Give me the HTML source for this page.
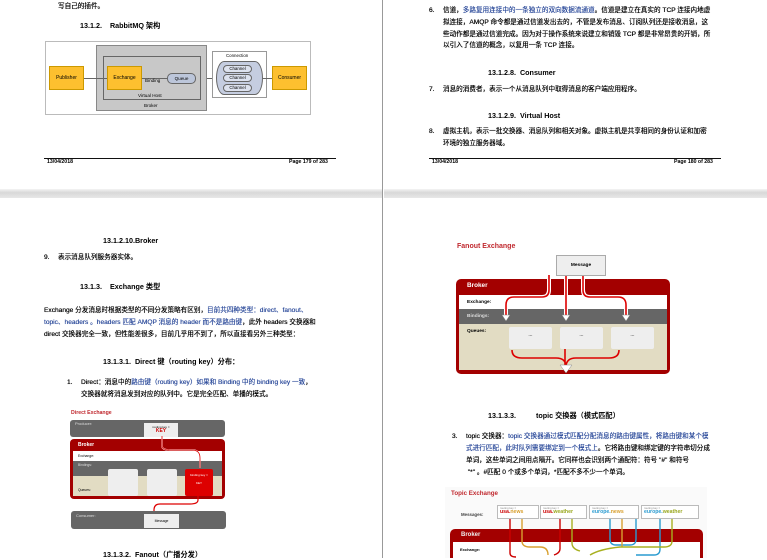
<!DOCTYPE html>
<html><head><meta charset="utf-8"><style>
*{margin:0;padding:0;box-sizing:border-box}
body{width:767px;height:558px;background:#fff;position:relative;overflow:hidden;font-family:"Liberation Sans","Noto Sans CJK SC",sans-serif;color:#000}
.t{position:absolute;font-size:6.6px;line-height:8px;white-space:nowrap;text-shadow:0 0 .4px #000}
.h{position:absolute;font-size:7.2px;font-weight:bold;white-space:nowrap}
.b{color:#2b4a9a;text-shadow:0 0 .4px #2b4a9a}
.ab{position:absolute}
.fl{position:absolute;height:1px;background:#111}
.ft{position:absolute;font-size:5.2px;font-weight:bold}
</style></head><body>
<div class="ab" style="left:0;top:189px;width:383px;height:9px;background:linear-gradient(#f4f4f4,#d8d8d8 40%,#e8e8e8)"></div>
<div class="ab" style="left:384px;top:189px;width:383px;height:9px;background:linear-gradient(#f4f4f4,#d8d8d8 40%,#e8e8e8)"></div>
<div class="ab" style="left:382px;top:0;width:1px;height:558px;background:#999"></div>

<div class="t" style="left:58px;top:3px">写自己的插件。</div>
<div class="h" style="left:80px;top:21px">13.1.2.&nbsp;&nbsp;&nbsp;&nbsp;RabbitMQ 架构</div>
<div class="ab" style="left:45px;top:41px;width:266px;height:74px;border:1px solid #bbb;background:#fff"></div>
<div class="ab" style="left:96px;top:45px;width:111px;height:66px;background:#c8c8c8;border:1px solid #888"></div>
<div class="ab" style="left:103px;top:56px;width:98px;height:44px;border:1px solid #666"></div>
<div class="ab" style="left:49px;top:66px;width:35px;height:24px;background:#fdc02f;border:1px solid #c90;font-size:5px;line-height:22px;text-align:center">Publisher</div>
<div class="ab" style="left:84px;top:78px;width:24px;height:1px;background:#666"></div>
<div class="ab" style="left:107px;top:66px;width:35px;height:24px;background:#fdc02f;border:1px solid #c90;font-size:5px;line-height:22px;text-align:center">Exchange</div>
<div class="ab" style="left:142px;top:78px;width:26px;height:1px;background:#666"></div>
<div class="ab" style="left:145px;top:78px;font-size:4.6px">Binding</div>
<div class="ab" style="left:167px;top:73px;width:29px;height:11px;background:#bcc6da;border:1px solid #666;border-radius:5px;font-size:4.6px;line-height:9px;text-align:center">Queue</div>
<div class="ab" style="left:138px;top:93px;font-size:4.6px">Virtual Host</div>
<div class="ab" style="left:144px;top:103px;font-size:4.6px">Broker</div>
<div class="ab" style="left:207px;top:78px;width:6px;height:1px;background:#666"></div>
<div class="ab" style="left:212px;top:51px;width:55px;height:47px;border:1px solid #999;background:#fff"></div>
<div class="ab" style="left:226px;top:53px;font-size:4.4px">Connection</div>
<div class="ab" style="left:216px;top:61px;width:47px;height:34px;background:#c5cde0;border:1px solid #666;border-radius:8px/17px"></div>
<div class="ab" style="left:223px;top:65px;width:29px;height:8px;background:#dde2ee;border:1px solid #666;border-radius:4px;font-size:4.4px;line-height:6px;text-align:center">Channel</div>
<div class="ab" style="left:223px;top:74px;width:29px;height:8px;background:#dde2ee;border:1px solid #666;border-radius:4px;font-size:4.4px;line-height:6px;text-align:center">Channel</div>
<div class="ab" style="left:223px;top:84px;width:29px;height:8px;background:#dde2ee;border:1px solid #666;border-radius:4px;font-size:4.4px;line-height:6px;text-align:center">Channel</div>
<div class="ab" style="left:263px;top:78px;width:10px;height:1px;background:#666"></div>
<div class="ab" style="left:272px;top:66px;width:35px;height:24px;background:#fdc02f;border:1px solid #c90;font-size:5px;line-height:22px;text-align:center">Consumer</div>
<div class="fl" style="left:44px;top:158px;width:292px"></div>
<div class="ft" style="left:47px;top:159px">13/04/2018</div>
<div class="ft" style="left:289px;top:159px">Page 179 of 283</div>

<div class="t" style="left:429px;top:7px">6.</div>
<div class="t" style="left:443px;top:7px">信道，<span class="b">多路复用连接中的一条独立的双向数据流通道</span>。信道是建立在真实的 TCP 连接内地虚</div>
<div class="t" style="left:443px;top:19px">拟连接，AMQP 命令都是通过信道发出去的，不管是发布消息、订阅队列还是接收消息，这</div>
<div class="t" style="left:443px;top:31px">些动作都是通过信道完成。因为对于操作系统来说建立和销毁 TCP 都是非常昂贵的开销，所</div>
<div class="t" style="left:443px;top:42px">以引入了信道的概念，以复用一条 TCP 连接。</div>
<div class="h" style="left:488px;top:68px">13.1.2.8.&nbsp; Consumer</div>
<div class="t" style="left:429px;top:86px">7.</div>
<div class="t" style="left:443px;top:86px">消息的消费者，表示一个从消息队列中取得消息的客户端应用程序。</div>
<div class="h" style="left:488px;top:111px">13.1.2.9.&nbsp; Virtual Host</div>
<div class="t" style="left:429px;top:128px">8.</div>
<div class="t" style="left:443px;top:128px">虚拟主机，表示一批交换器、消息队列和相关对象。虚拟主机是共享相同的身份认证和加密</div>
<div class="t" style="left:443px;top:140px">环境的独立服务器域。</div>
<div class="fl" style="left:429px;top:158px;width:292px"></div>
<div class="ft" style="left:432px;top:159px">13/04/2018</div>
<div class="ft" style="left:674px;top:159px">Page 180 of 283</div>

<div class="h" style="left:103px;top:236px">13.1.2.10.Broker</div>
<div class="t" style="left:44px;top:254px">9.</div>
<div class="t" style="left:58px;top:254px">表示消息队列服务器实体。</div>
<div class="h" style="left:80px;top:282px">13.1.3.&nbsp;&nbsp;&nbsp;&nbsp;Exchange 类型</div>
<div class="t" style="left:44px;top:307px">Exchange 分发消息时根据类型的不同分发策略有区别，<span class="b">目前共四种类型：direct、fanout、</span></div>
<div class="t" style="left:44px;top:319px"><span class="b">topic、headers 。headers 匹配 AMQP 消息的 header 而不是路由键</span>，此外 headers 交换器和</div>
<div class="t" style="left:44px;top:331px">direct 交换器完全一致，但性能差很多，目前几乎用不到了，所以直接看另外三种类型：</div>
<div class="h" style="left:103px;top:357px">13.1.3.1.&nbsp; Direct 键（routing key）分布：</div>
<div class="t" style="left:67px;top:379px">1.</div>
<div class="t" style="left:81px;top:379px">Direct：消息中的<span class="b">路由键（routing key）如果和 Binding 中的 binding key 一致</span>，</div>
<div class="t" style="left:81px;top:391px">交换器就将消息发到对应的队列中。它是完全匹配、单播的模式。</div>
<div class="ab" style="left:71px;top:410px;font-size:5.2px;font-weight:bold;color:#c0282e">Direct Exchange</div>
<div class="ab" style="left:70px;top:420px;width:155px;height:17px;background:#666;border-radius:3px"></div>
<div class="ab" style="left:75px;top:421px;font-size:4px;color:#ddd">Producer:</div>
<div class="ab" style="left:144px;top:423px;width:34px;height:14px;background:#eee;font-size:3px;text-align:center;line-height:4px;padding-top:2px">routing key =<br><b style="color:#c00;font-size:5px">KEY</b></div>
<div class="ab" style="left:70px;top:439px;width:155px;height:60px;background:#a30000;border-radius:4px"></div>
<div class="ab" style="left:78px;top:442px;font-size:5px;color:#fff;font-weight:bold">Broker</div>
<div class="ab" style="left:73px;top:451px;width:149px;height:10px;background:#fff"></div>
<div class="ab" style="left:78px;top:454px;font-size:3.4px">Exchange:</div>
<div class="ab" style="left:73px;top:461px;width:149px;height:15px;background:#666"></div>
<div class="ab" style="left:73px;top:476px;width:149px;height:20px;background:#e2dcc3"></div>
<div class="ab" style="left:78px;top:463px;font-size:3.4px;color:#ddd">Bindings:</div>
<div class="ab" style="left:78px;top:488px;font-size:3.4px">Queues:</div>
<div class="ab" style="left:108px;top:469px;width:30px;height:27px;background:#eee;border-radius:2px"></div>
<div class="ab" style="left:147px;top:469px;width:30px;height:27px;background:#eee;border-radius:2px"></div>
<div class="ab" style="left:185px;top:469px;width:28px;height:27px;background:#d00;border-radius:2px;font-size:3px;color:#fff;text-align:center;padding-top:4px">binding key =<br><br>KEY</div>
<svg class="ab" style="left:70px;top:420px" width="160" height="115"><path d="M92 16V26Q92 30 100 30H122Q130 30 130 38V48" fill="none" stroke="#fff" stroke-width="1.5"/><path d="M92 16V26Q92 30 100 30H122Q130 30 130 38V48" fill="none" stroke="#d00" stroke-width="0.8"/><path d="M128 76V80Q128 84 120 84H90Q84 84 84 90V96" fill="none" stroke="#d00" stroke-width="1.2"/></svg>
<div class="ab" style="left:71px;top:511px;width:155px;height:18px;background:#666;border-radius:3px"></div>
<div class="ab" style="left:76px;top:513px;font-size:4px;color:#ddd">Consumer:</div>
<div class="ab" style="left:144px;top:514px;width:35px;height:14px;background:#eee;font-size:3.4px;text-align:center;line-height:14px">Message</div>
<div class="h" style="left:103px;top:550px">13.1.3.2.&nbsp; Fanout（广播分发）</div>

<div class="ab" style="left:457px;top:243px;font-size:7px;font-weight:bold;color:#c0282e">Fanout Exchange</div>
<div class="ab" style="left:456px;top:279px;width:214px;height:95px;background:#a30000;border-radius:5px"></div>
<div class="ab" style="left:467px;top:282px;font-size:6.4px;color:#fff;font-weight:bold">Broker</div>
<div class="ab" style="left:459px;top:295px;width:208px;height:14px;background:#fff"></div>
<div class="ab" style="left:467px;top:300px;font-size:4.8px;font-weight:bold">Exchange:</div>
<div class="ab" style="left:459px;top:309px;width:208px;height:15px;background:#666"></div>
<div class="ab" style="left:467px;top:314px;font-size:4.8px;color:#ddd;font-weight:bold">Bindings:</div>
<div class="ab" style="left:459px;top:324px;width:208px;height:46px;background:#e2dcc3"></div>
<div class="ab" style="left:467px;top:329px;font-size:4.8px;font-weight:bold">Queues:</div>
<div class="ab" style="left:509px;top:327px;width:43px;height:22px;background:#eee;border-radius:2px;font-size:5px;text-align:center;line-height:16px">...</div>
<div class="ab" style="left:560px;top:327px;width:43px;height:22px;background:#eee;border-radius:2px;font-size:5px;text-align:center;line-height:16px">...</div>
<div class="ab" style="left:611px;top:327px;width:43px;height:22px;background:#eee;border-radius:2px;font-size:5px;text-align:center;line-height:16px">...</div>
<svg class="ab" style="left:456px;top:255px" width="220" height="120"><g fill="none" stroke="#fff" stroke-width="4"><path d="M93 20V35Q93 42 86 42H58Q50 42 50 50V60M110 20V60M127 20V35Q127 42 134 42H162Q170 42 170 50V60"/></g><g fill="none" stroke="#d00" stroke-width="1.6"><path d="M93 20V35Q93 42 86 42H58Q50 42 50 50V60M110 20V60M127 20V35Q127 42 134 42H162Q170 42 170 50V60M56 95Q56 103 66 103H100Q110 103 110 112M109 94V112M163 95Q163 103 153 103H120Q110 103 110 112"/></g><g fill="#fff" stroke="#888" stroke-width=".5"><path d="M46 60H54L50 66ZM106 60H114L110 66ZM166 60H174L170 66ZM104 110H116L110 118Z"/></g></svg>
<div class="ab" style="left:556px;top:255px;width:50px;height:21px;background:#eee;border:1px solid #aaa;font-size:4.8px;font-weight:bold;text-align:center;line-height:19px">Message</div>
<div class="h" style="left:488px;top:411px">13.1.3.3.&nbsp;&nbsp;&nbsp;&nbsp;&nbsp;&nbsp;&nbsp;&nbsp;&nbsp;&nbsp;topic 交换器（模式匹配）</div>
<div class="t" style="left:452px;top:433px">3.</div>
<div class="t" style="left:466px;top:433px">topic 交换器：<span class="b">topic 交换器通过模式匹配分配消息的路由键属性，将路由键和某个模</span></div>
<div class="t" style="left:466px;top:445px"><span class="b">式进行匹配，此时队列需要绑定到一个模式上</span>。它将路由键和绑定键的字符串切分成</div>
<div class="t" style="left:466px;top:457px">单词，这些单词之间用点隔开。它同样也会识别两个通配符：符号 "#" 和符号</div>
<div class="t" style="left:466px;top:469px">&nbsp;"*"&nbsp;。#匹配 0 个或多个单词，*匹配不多不少一个单词。</div>
<div class="ab" style="left:445px;top:487px;width:262px;height:71px;background:#fafafa"></div>
<div class="ab" style="left:451px;top:490px;font-size:6.2px;font-weight:bold;color:#c0282e">Topic Exchange</div>
<div class="ab" style="left:461px;top:512px;font-size:4.4px;font-weight:bold;color:#444">Messages:</div>
<div class="ab" style="left:497px;top:505px;width:42px;height:14px;background:#fff;border:1px solid #bbb;font-size:2.8px;color:#888;padding:1px 2px;line-height:3.5px">routing key =<br><b style="font-size:5.2px;color:#c00">usa.<span style="color:#d8a030">news</span></b></div>
<div class="ab" style="left:540px;top:505px;width:47px;height:14px;background:#fff;border:1px solid #bbb;font-size:2.8px;color:#888;padding:1px 2px;line-height:3.5px">routing key =<br><b style="font-size:5.2px;color:#c00">usa.<span style="color:#9aa820">weather</span></b></div>
<div class="ab" style="left:589px;top:505px;width:50px;height:14px;background:#fff;border:1px solid #bbb;font-size:2.8px;color:#888;padding:1px 2px;line-height:3.5px">routing key =<br><b style="font-size:5.2px;color:#2a9bd0">europe.<span style="color:#d8a030">news</span></b></div>
<div class="ab" style="left:641px;top:505px;width:58px;height:14px;background:#fff;border:1px solid #bbb;font-size:2.8px;color:#888;padding:1px 2px;line-height:3.5px">routing key =<br><b style="font-size:5.2px;color:#2a9bd0">europe.<span style="color:#9aa820">weather</span></b></div>
<div class="ab" style="left:450px;top:529px;width:253px;height:29px;background:#a30000;border-radius:5px 5px 0 0"></div>
<div class="ab" style="left:461px;top:532px;font-size:6px;color:#eee;font-weight:bold">Broker</div>
<div class="ab" style="left:453px;top:542px;width:247px;height:16px;background:#fff"></div>
<div class="ab" style="left:460px;top:547px;font-size:4px;font-weight:bold">Exchange:</div>
<svg class="ab" style="left:450px;top:519px" width="255" height="39"><g fill="none" stroke-width="1.4"><path d="M60 0V34Q60 38 66 38" stroke="#c00"/><path d="M72 0V22Q72 28 80 28H90Q98 28 98 36" stroke="#d8a030"/><path d="M110 0V30Q110 34 104 36" stroke="#c00"/><path d="M122 0V24Q122 30 130 32" stroke="#a8b020"/><path d="M160 0V20Q160 26 166 26H180Q186 26 186 20V0" stroke="#2a9bd0"/><path d="M172 0V28" stroke="#d8a030"/><path d="M210 0V30Q210 36 204 36H186" stroke="#2a9bd0"/><path d="M222 0V22Q222 28 214 28H170Q150 30 140 36" stroke="#a8b020"/></g></svg>
</body></html>
